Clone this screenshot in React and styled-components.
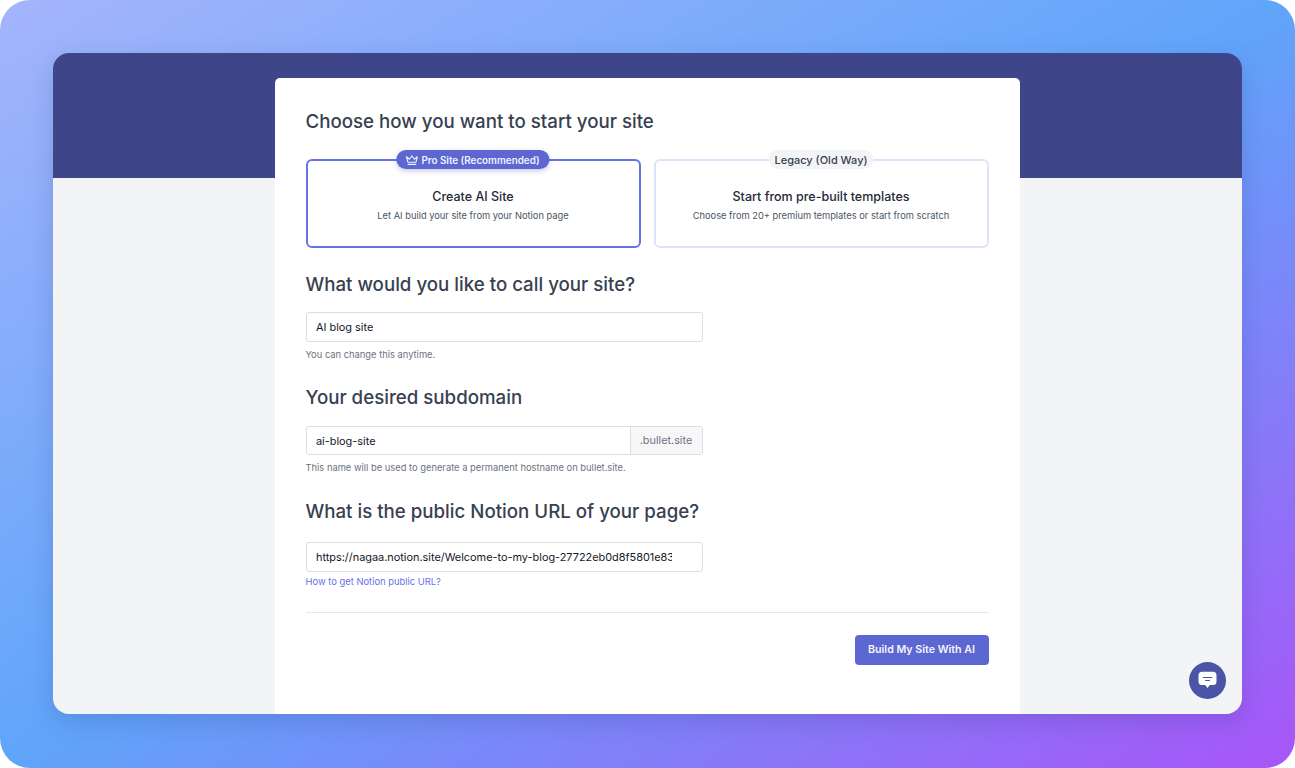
import React from 'react'
import styled, { createGlobalStyle } from 'styled-components'

const GlobalStyle = createGlobalStyle`
  html, body {
    margin: 0;
    padding: 0;
    background: #fff;
  }
  * {
    box-sizing: border-box;
  }
  body {
    font-family: Inter, "Noto Sans", sans-serif;
    overflow: hidden;
  }
`

const Backdrop = styled.div`
  height: 768px;
  padding: 53px 53px 54px;
  border-radius: 30px;
  background: linear-gradient(to bottom right, #a5b4fc, #60a5fa 50%, #a855f7);
`

const Window = styled.div`
  position: relative;
  height: 661px;
  padding-top: 25px;
  border-radius: 16px;
  overflow: hidden;
  background: linear-gradient(#3f4589 125px, #f3f4f6 125px);
  box-shadow: 0 8px 24px rgba(40, 40, 110, 0.18);
  display: flex;
  justify-content: center;
`

const Card = styled.main`
  width: 745px;
  height: 636px;
  margin-left: -1px;
  padding: 32px 31px 0;
  background: #fff;
  border-radius: 5px 5px 0 0;
`

const Title = styled.h2`
  margin: 0 0 ${p => p.$gap || 15}px;
  height: 24px;
  font-size: 18.7px;
  line-height: 24px;
  font-weight: 500;
  color: #374151;
`

const Options = styled.div`
  display: grid;
  grid-template-columns: 335px 335px;
  gap: 13px;
  margin: 25px 0 25px;
`

const Option = styled.div`
  position: relative;
  height: 89px;
  padding-top: 28px;
  border-radius: 6px;
  border: 2px solid ${p => (p.$active ? '#6672e8' : '#dfe2f8')};
  text-align: center;
`

const Badge = styled.span`
  position: absolute;
  top: -11px;
  left: 50%;
  transform: translateX(-50%);
  height: 19px;
  padding: 0 10px 0 9px;
  border-radius: 10px;
  display: flex;
  align-items: center;
  gap: 3px;
  white-space: nowrap;
  font-size: 9.85px;
  font-weight: 600;
  color: #f1f2ff;
  background: #5d67d2;
  box-shadow: 0 2px 5px rgba(70, 80, 190, 0.3);
`

const PlainBadge = styled(Badge)`
  padding: 0 6px;
  font-size: 11px;
  font-weight: 500;
  color: #374151;
  background: #f3f4f6;
  box-shadow: none;
`

const OptionName = styled.div`
  font-size: 12.5px;
  line-height: 16px;
  font-weight: 500;
  color: #1f2937;
`

const OptionText = styled.div`
  margin-top: 4px;
  font-size: 9.3px;
  line-height: 14px;
  color: #4b5563;
`

const Field = styled.div`
  display: flex;
  width: 397px;
  height: ${p => p.$height || 30}px;
  margin-bottom: ${p => p.$gap || 6}px;
  border: 1px solid #dcdee3;
  border-radius: 3px;
  background: #fff;
  overflow: hidden;
`

const Input = styled.input`
  flex: 1;
  min-width: 0;
  height: 100%;
  padding: 0 30px 0 9.5px;
  border: 0;
  outline: 0;
  background: transparent;
  font-family: inherit;
  font-size: 10.9px;
  color: #111827;
`

const Addon = styled.span`
  width: 72px;
  border-left: 1px solid #dcdee3;
  background: #f7f7f8;
  color: #6b7280;
  font-size: 10.85px;
  line-height: 27px;
  text-align: center;
`

const Hint = styled.p`
  margin: 0 0 ${p => p.$gap || 25}px;
  height: 13px;
  font-size: 9.35px;
  line-height: 13px;
  color: #6b7280;
`

const HelpLink = styled.a`
  display: block;
  height: 13px;
  font-size: 9.4px;
  line-height: 13px;
  color: #6672e8;
  text-decoration: none;
`

const Footer = styled.div`
  margin-top: 24px;
  padding-top: 22px;
  border-top: 1px solid #e5e7eb;
  display: flex;
  justify-content: flex-end;
`

const BuildButton = styled.button`
  width: 134px;
  height: 29.5px;
  border: 0;
  border-radius: 4px;
  background: #5d67d2;
  color: #f4f5ff;
  font-family: inherit;
  font-size: 10.65px;
  font-weight: 600;
`

const ChatButton = styled.button`
  position: absolute;
  left: 1136px;
  top: 609px;
  width: 37px;
  height: 37px;
  padding: 0;
  border: 0;
  border-radius: 50%;
  background: #4a55a6;
  display: flex;
  align-items: center;
  justify-content: center;
`

const CrownIcon = () => (
  <svg width="13" height="13" viewBox="0 0 24 24" fill="none" stroke="#f1f2ff" strokeWidth="2" strokeLinecap="round" strokeLinejoin="round">
    <path d="M12 5l4.500 6.500L22 7l-2.500 10h-15L2 7l5.500 4.500z" />
    <path d="M5 21h14" />
  </svg>
)

const ChatIcon = () => (
  <svg width="19" height="19" viewBox="0 0 19 19">
    <path d="M4 .7h11a3.500 3.500 0 0 1 3.500 3.500v6.300a3.500 3.500 0 0 1-3.500 3.500h-3.200L9.500 17l-2.300-3H4a3.500 3.500 0 0 1-3.500-3.500V4.200a3.500 3.500 0 0 1 3.500-3.500z" fill="#fff" />
    <path d="M5.200 6.500h8.600M7.500 9.500h4" stroke="#4a55a6" strokeWidth="1.200" strokeLinecap="round" />
  </svg>
)

const App = () => (
  <>
    <GlobalStyle />
    <Backdrop>
      <Window>
        <Card>
          <Title>Choose how you want to start your site</Title>
          <Options>
            <Option $active>
              <Badge><CrownIcon />Pro Site (Recommended)</Badge>
              <OptionName>Create AI Site</OptionName>
              <OptionText>Let AI build your site from your Notion page</OptionText>
            </Option>
            <Option>
              <PlainBadge>Legacy (Old Way)</PlainBadge>
              <OptionName>Start from pre-built templates</OptionName>
              <OptionText>Choose from 20+ premium templates or start from scratch</OptionText>
            </Option>
          </Options>

          <Title>What would you like to call your site?</Title>
          <Field><Input readOnly value="AI blog site" /></Field>
          <Hint>You can change this anytime.</Hint>

          <Title $gap={16}>Your desired subdomain</Title>
          <Field $height={29}>
            <Input readOnly value="ai-blog-site" />
            <Addon>.bullet.site</Addon>
          </Field>
          <Hint $gap={26}>This name will be used to generate a permanent hostname on bullet.site.</Hint>

          <Title $gap={18}>What is the public Notion URL of your page?</Title>
          <Field $gap={3}><Input readOnly value="https://nagaa.notion.site/Welcome-to-my-blog-27722eb0d8f5801e83a1c4" /></Field>
          <HelpLink href="#">How to get Notion public URL?</HelpLink>

          <Footer>
            <BuildButton>Build My Site With AI</BuildButton>
          </Footer>
        </Card>
        <ChatButton aria-label="Chat"><ChatIcon /></ChatButton>
      </Window>
    </Backdrop>
  </>
)

export default App
